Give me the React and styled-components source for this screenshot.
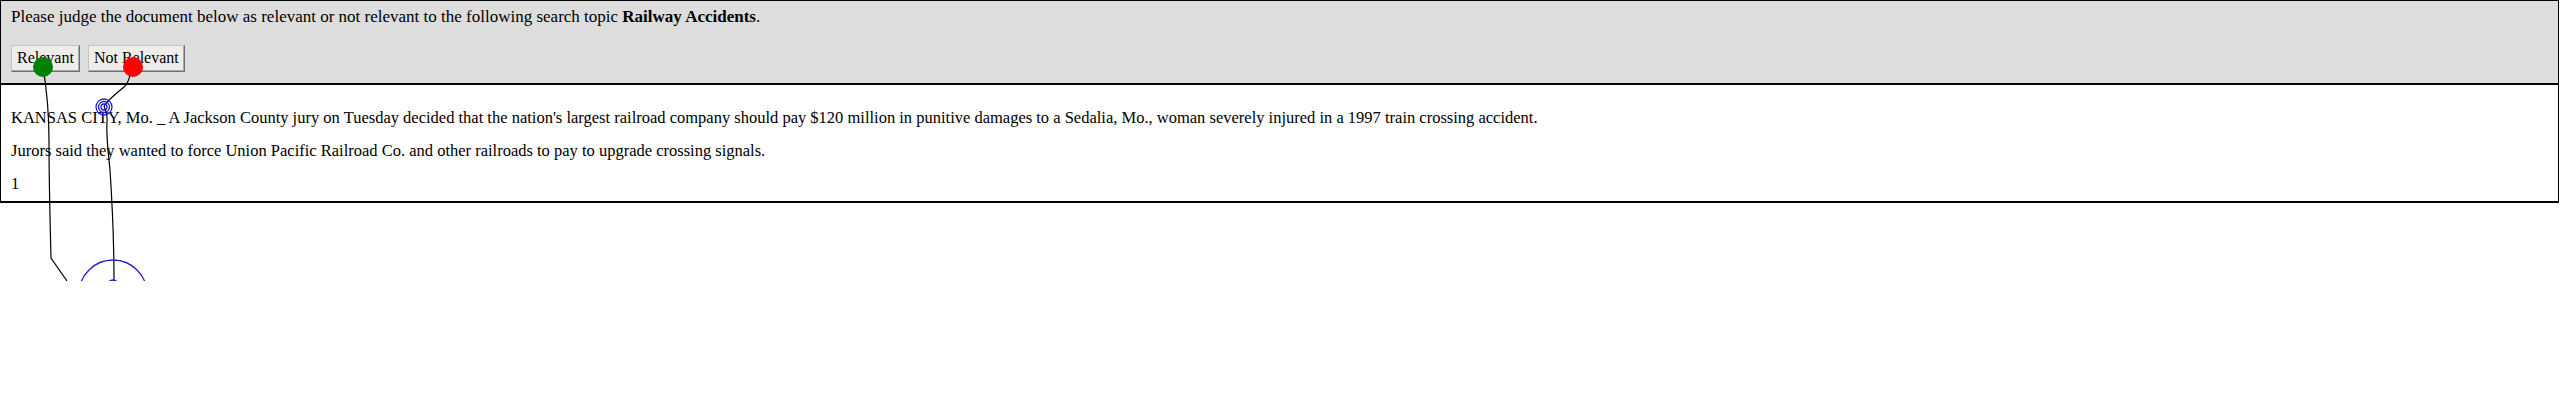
import React from 'react'
import { styled, createGlobalStyle } from 'styled-components'

const GlobalStyle = createGlobalStyle`
  html, body {
    margin: 0;
    padding: 0;
    background: #fff;
  }
  body {
    font-family: "Liberation Serif", "Times New Roman", serif;
    font-size: 16px;
    color: #000;
  }
`;

export default function App() {
  return (
    <Page>
      <GlobalStyle />
      <Header>
        <Prompt>
          Please judge the document below as relevant or not relevant to the following search topic <b>Railway Accidents</b>.
        </Prompt>
        <ButtonRow>
          <JudgeButton type="button">Relevant</JudgeButton>
          <JudgeButton type="button">Not Relevant</JudgeButton>
        </ButtonRow>
      </Header>
      <Document>
        <Para>KANSAS CITY, Mo. _ A Jackson County jury on Tuesday decided that the nation's largest railroad company should pay $120 million in punitive damages to a Sedalia, Mo., woman severely injured in a 1997 train crossing accident.</Para>
        <Para>Jurors said they wanted to force Union Pacific Railroad Co. and other railroads to pay to upgrade crossing signals.</Para>
        <Para>1</Para>
      </Document>

      {/* mouse trail overlay */}
      <Trail viewBox="0 0 200 281">
        <path d="M43,67 C46,85 49,110 49,140 C49,180 50,220 51,258 L67,281" />
        <path d="M132,67 C130,78 128,84 124,87 C118,92 110,98 104,106" />
        <path d="M104,106 C106,112 108,116 107,122 C106,135 108,150 110,170 C112,200 114,230 114,281" />
        <g className="rings">
          <circle cx="104" cy="107" r="8" />
          <circle cx="104" cy="107" r="5.5" />
          <circle cx="104" cy="107" r="3" />
          <circle cx="113" cy="294" r="34" />
          <circle cx="113" cy="286" r="6" />
        </g>
        <circle cx="43" cy="67" r="10" fill="#008000" stroke="none" />
        <circle cx="133" cy="67" r="10" fill="#ff0000" stroke="none" />
      </Trail>
    </Page>
  )
}

const Page = styled.div`
  position: relative;
  width: 2559px;
  min-height: 281px;
`;

const Header = styled.div`
  border: 1px solid #000;
  background: #dddddd;
  padding: 7px 10px 11px;
`;

const Prompt = styled.div`
  font-size: 17px;
  line-height: 18px;
  margin-bottom: 19px;
`;

const ButtonRow = styled.div`
  display: flex;
  gap: 8px;
`;

const JudgeButton = styled.button`
  font-family: "Liberation Serif", "Times New Roman", serif;
  font-size: 16px;
  line-height: 18px;
  color: #000;
  background: #efedea;
  padding: 3px 5px 4px;
  border: 1px solid;
  border-color: #c4c4c4 #707070 #707070 #c4c4c4;
  box-shadow: inset -1px -1px 0 #a8a8a8;
  border-radius: 0;
  cursor: pointer;
`;

const Document = styled.div`
  border: 1px solid #000;
  border-bottom-width: 2px;
  padding: 24px 10px 8px;
`;

const Para = styled.p`
  margin: 0 0 15px;
  font-size: 16.5px;
  line-height: 18px;
  &:last-child {
    margin-bottom: 0;
  }
`;

const Trail = styled.svg`
  position: absolute;
  top: 0;
  left: 0;
  z-index: 1;
  width: 200px;
  height: 281px;
  overflow: hidden;
  pointer-events: none;
  fill: none;
  stroke: #000;
  stroke-width: 1.2;

  .rings circle {
    stroke: #1f1fd0;
    stroke-width: 1.3;
  }
`;
